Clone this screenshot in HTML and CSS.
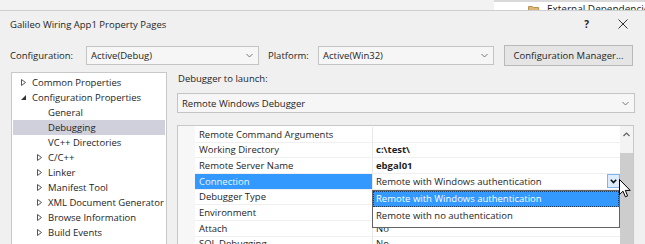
FILE: index.html
```html
<!DOCTYPE html>
<html>
<head>
<link rel="stylesheet" href="styles.css">
</head>
<body>
	<div class="desk">
		<div class="solution">
			<svg class="twisty" width="5" height="7" viewBox="0 0 5 7"><polygon points="0.5,0.5 4.5,3.5 0.5,6.5" fill="none" stroke="#666" stroke-width="1"/></svg>
			<svg class="folder" width="11" height="8" viewBox="0 0 11 8"><path d="M0.5 1.5h4l1 1h5v5h-10z" fill="#dcb67a" stroke="#b8924f" stroke-width="1"/></svg>
			<span>External Dependencies</span>
		</div>
	</div>
	<div class="dialog">
		<div class="titlebar">
			<span class="title">Galileo Wiring App1 Property Pages</span>
			<span class="help">?</span>
			<svg class="close" width="10" height="10" viewBox="0 0 10 10"><path d="M0.5 0.5L9.5 9.5M9.5 0.5L0.5 9.5" stroke="#333" stroke-width="1"/></svg>
		</div>
		<div class="configbar">
			<span class="lbl lbl-config">Configuration:</span>
			<div class="combo combo-config"><span>Active(Debug)</span><svg class="chev" width="7" height="5" viewBox="0 0 7 5"><polyline points="0.5,1 3.5,4 6.5,1" fill="none" stroke="#777" stroke-width="1"/></svg></div>
			<span class="lbl lbl-platform">Platform:</span>
			<div class="combo combo-platform"><span>Active(Win32)</span><svg class="chev" width="7" height="5" viewBox="0 0 7 5"><polyline points="0.5,1 3.5,4 6.5,1" fill="none" stroke="#777" stroke-width="1"/></svg></div>
			<div class="btn">Configuration Manager...</div>
		</div>
		<div class="main">
			<div class="tree">
				<div class="node"><svg class="twisty" width="5" height="7" viewBox="0 0 5 7"><polygon points="0.5,0.5 4.5,3.5 0.5,6.5" fill="none" stroke="#555" stroke-width="1"/></svg><span>Common Properties</span></div>
				<div class="node"><svg class="twisty" width="5" height="7" viewBox="0 0 5 7"><polygon points="5,1 5,6 0,6" fill="#333"/></svg><span>Configuration Properties</span></div>
				<div class="node leaf"><span>General</span></div>
				<div class="node leaf active"><span>Debugging</span></div>
				<div class="node leaf"><span>VC++ Directories</span></div>
				<div class="node sub"><svg class="twisty" width="5" height="7" viewBox="0 0 5 7"><polygon points="0.5,0.5 4.5,3.5 0.5,6.5" fill="none" stroke="#555" stroke-width="1"/></svg><span>C/C++</span></div>
				<div class="node sub"><svg class="twisty" width="5" height="7" viewBox="0 0 5 7"><polygon points="0.5,0.5 4.5,3.5 0.5,6.5" fill="none" stroke="#555" stroke-width="1"/></svg><span>Linker</span></div>
				<div class="node sub"><svg class="twisty" width="5" height="7" viewBox="0 0 5 7"><polygon points="0.5,0.5 4.5,3.5 0.5,6.5" fill="none" stroke="#555" stroke-width="1"/></svg><span>Manifest Tool</span></div>
				<div class="node sub"><svg class="twisty" width="5" height="7" viewBox="0 0 5 7"><polygon points="0.5,0.5 4.5,3.5 0.5,6.5" fill="none" stroke="#555" stroke-width="1"/></svg><span>XML Document Generator</span></div>
				<div class="node sub"><svg class="twisty" width="5" height="7" viewBox="0 0 5 7"><polygon points="0.5,0.5 4.5,3.5 0.5,6.5" fill="none" stroke="#555" stroke-width="1"/></svg><span>Browse Information</span></div>
				<div class="node sub"><svg class="twisty" width="5" height="7" viewBox="0 0 5 7"><polygon points="0.5,0.5 4.5,3.5 0.5,6.5" fill="none" stroke="#555" stroke-width="1"/></svg><span>Build Events</span></div>
			</div>
			<div class="content">
				<div class="launch-label">Debugger to launch:</div>
				<div class="combo combo-launch"><span>Remote Windows Debugger</span><svg class="chev" width="7" height="5" viewBox="0 0 7 5"><polyline points="0.5,1 3.5,4 6.5,1" fill="none" stroke="#777" stroke-width="1"/></svg></div>
				<div class="grid">
					<div class="gutter"></div>
					<div class="rows">
						<div class="row"><div class="name">Remote Command Arguments</div><div class="value"></div></div>
						<div class="row"><div class="name">Working Directory</div><div class="value bold">c:\test\</div></div>
						<div class="row"><div class="name">Remote Server Name</div><div class="value bold">ebgal01</div></div>
						<div class="row selected"><div class="name">Connection</div><div class="value editing"><span>Remote with Windows authentication</span><span class="drop-btn"><svg width="7" height="5" viewBox="0 0 7 5"><polyline points="0.8,0.8 3.5,3.6 6.2,0.8" fill="none" stroke="#111" stroke-width="1.6"/></svg></span></div></div>
						<div class="row"><div class="name">Debugger Type</div><div class="value"></div></div>
						<div class="row"><div class="name">Environment</div><div class="value"></div></div>
						<div class="row"><div class="name">Attach</div><div class="value">No</div></div>
						<div class="row"><div class="name">SQL Debugging</div><div class="value">No</div></div>
					</div>
					<div class="scrollbar">
						<div class="sb-up"><svg width="7" height="5" viewBox="0 0 7 5"><polyline points="0.5,4 3.5,1 6.5,4" fill="none" stroke="#606060" stroke-width="1.2"/></svg></div>
						<div class="sb-thumb"></div>
					</div>
					<div class="droplist">
						<div class="opt current">Remote with Windows authentication</div>
						<div class="opt">Remote with no authentication</div>
					</div>
					<svg class="cursor" width="12" height="19" viewBox="0 0 12 19"><path d="M0.5 0.5V15.5L4 12.2L6.4 17.8L8.6 16.9L6.3 11.4H11.2Z" fill="#fff" stroke="#000" stroke-width="1"/></svg>
				</div>
			</div>
		</div>
	</div>
</body>
</html>
```

FILE: styles.css
```css
body{
	margin: 0;
	width: 645px;
	height: 244px;
	overflow: hidden;
	background: #f2f2f2;
	font-family: "Open Sans", "Noto Sans", sans-serif;
	font-size: 9.5px;
	color: #1e1e1e;
}
.desk{
	height: 10px;
	display: flex;
	justify-content: flex-end;
	overflow: hidden;
}
.solution{
	width: 151px;
	height: 16px;
	flex: none;
	background: #fff;
	border-top: 2px solid #d9d9d9;
	display: flex;
	align-items: center;
	padding-left: 26px;
	box-sizing: border-box;
}
.solution .folder{
	margin: 0 8px 0 8px;
	flex: none;
}
.solution span{
	white-space: nowrap;
	font-size: 10px;
}
.dialog{
	background: #f0f0f0;
	border-top: 1px solid #cfcfcf;
	height: 240px;
}
.titlebar{
	height: 26px;
	display: flex;
	align-items: center;
	padding-left: 10px;
}
.title{
	flex: 1;
}
.help{
	font-weight: bold;
	font-size: 10px;
	margin-right: 29px;
}
.close{
	margin-right: 17px;
}
.configbar{
	display: flex;
	align-items: center;
	height: 21px;
	margin-top: 8px;
	padding-left: 10px;
}
.lbl-config{
	width: 76px;
}
.lbl-platform{
	width: 50px;
	margin-left: 9px;
}
.combo{
	height: 19px;
	box-sizing: border-box;
	border: 1px solid #c4c4c4;
	background: #f6f6f6;
	display: flex;
	align-items: center;
	padding: 0 5px 0 4px;
}
.combo span{
	flex: 1;
}
.combo-config{
	width: 173px;
}
.combo-platform{
	width: 176px;
}
.btn{
	width: 129px;
	height: 21px;
	box-sizing: border-box;
	margin-left: 10px;
	border: 1px solid #b9b9b9;
	background: #e5e5e5;
	display: flex;
	align-items: center;
	justify-content: center;
}
.main{
	display: flex;
	margin-top: 6px;
	padding-left: 11px;
}
.tree{
	width: 156px;
	height: 190px;
	box-sizing: border-box;
	border: 1px solid #c8c8c8;
	background: #fff;
	padding-top: 2px;
}
.node{
	height: 15px;
	display: flex;
	align-items: center;
	padding-left: 9px;
	white-space: nowrap;
}
.node .twisty{
	width: 5px;
	margin-right: 6px;
	flex: none;
}
.node.sub{
	padding-left: 25px;
}
.node.leaf{
	padding-left: 36px;
}
.node.active{
	background: #cfd0dc;
	margin: 0 1px;
	padding-left: 35px;
}
.content{
	margin-left: 9px;
	width: 459px;
}
.launch-label{
	height: 14px;
	line-height: 14px;
	padding-left: 2px;
}
.combo-launch{
	margin: 7px 0 0 1px;
	width: 458px;
	height: 20px;
	padding-right: 5px;
}
.grid{
	position: relative;
	margin: 12px 0 0 1px;
	width: 457px;
	height: 130px;
	box-sizing: border-box;
	border: 1px solid #c8c8c8;
	background: #fff;
	display: flex;
}
.gutter{
	width: 17px;
	background: #f7f7f8;
}
.rows{
	width: 425px;
	padding-top: 1px;
}
.row{
	height: 15.67px;
	box-sizing: border-box;
	border-bottom: 1px solid #f0f0f0;
	display: grid;
	grid-template-columns: 177px 1fr;
	align-items: center;
	white-space: nowrap;
}
.name{
	padding-left: 4px;
	height: 100%;
	display: flex;
	align-items: center;
}
.value{
	height: 100%;
	border-left: 1px solid #e8e8e8;
	padding-left: 3px;
	display: flex;
	align-items: center;
}
.bold{
	font-weight: bold;
}
.selected .name{
	background: #3399ff;
	color: #eef4ff;
}
.editing span{
	flex: 1;
}
.drop-btn{
	flex: none !important;
	width: 13px;
	height: 14px;
	box-sizing: border-box;
	border: 1px solid #7eb4ea;
	background: #dcecfc;
	display: flex;
	align-items: center;
	justify-content: center;
}
.scrollbar{
	width: 13px;
	background: #f3f3f3;
}
.sb-up{
	height: 17px;
	display: flex;
	align-items: center;
	justify-content: center;
}
.sb-thumb{
	margin-top: 10px;
	height: 100px;
	background: #cdcdcd;
}
.droplist{
	position: absolute;
	left: 194px;
	top: 64px;
	width: 248px;
	height: 38px;
	box-sizing: border-box;
	border: 1px solid #646464;
	background: #fff;
	white-space: nowrap;
}
.opt{
	height: 17px;
	line-height: 17px;
	padding-left: 3px;
}
.opt.current{
	height: 16px;
	line-height: 14px;
	box-sizing: border-box;
	background: #3399ff;
	color: #fff;
	border: 1px dotted #1a3d66;
	padding-left: 2px;
}
.cursor{
	position: absolute;
	left: 441px;
	top: 53px;
}
```
